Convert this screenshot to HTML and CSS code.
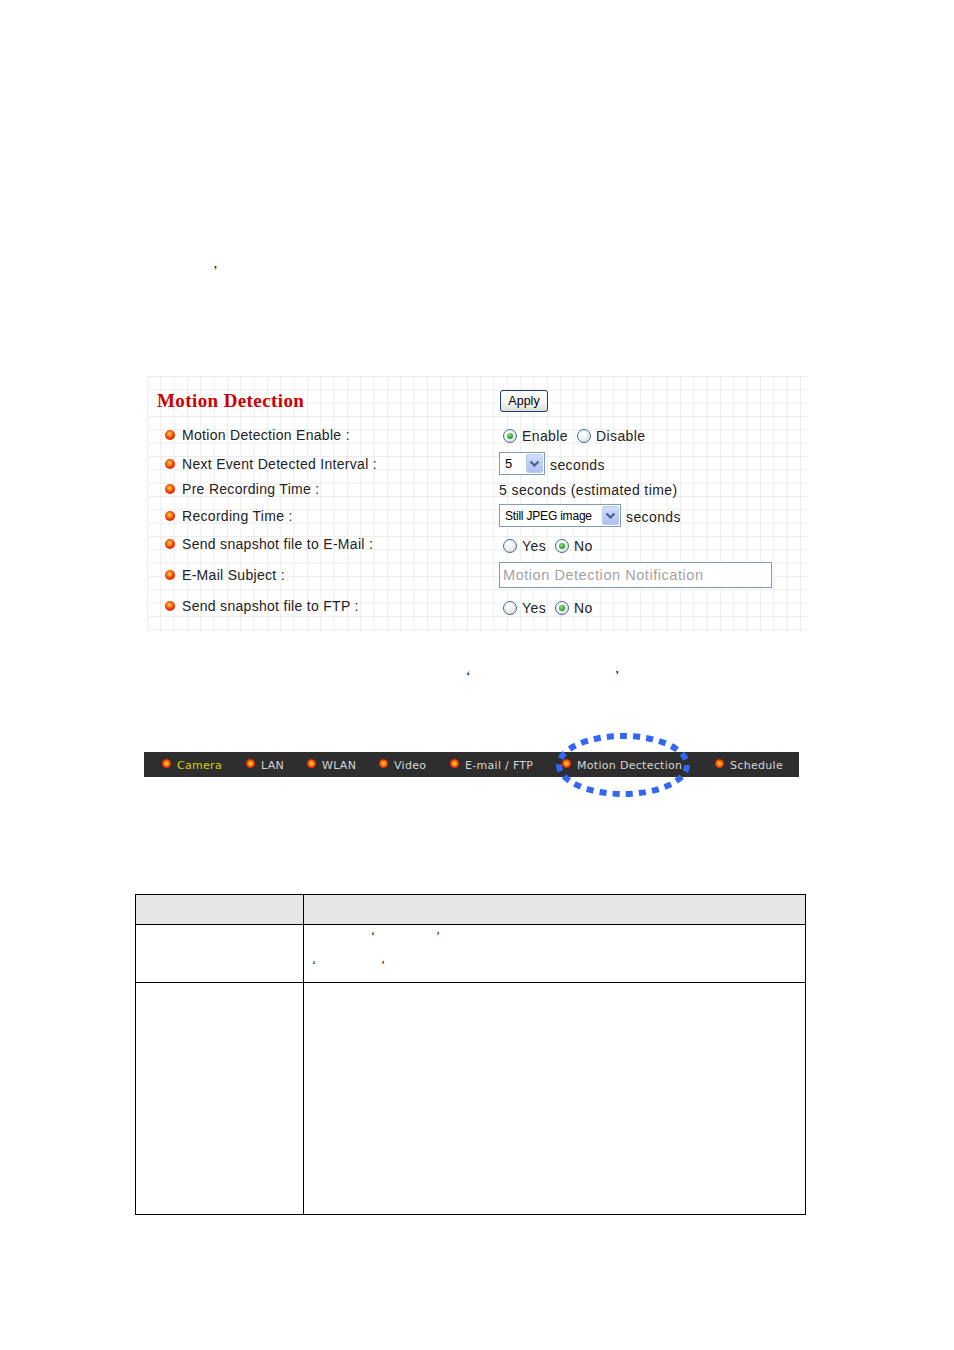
FILE: index.html
```html
<!DOCTYPE html>
<html>
<head>
<meta charset="utf-8">
<title>Motion Detection</title>
<link rel="stylesheet" href="styles.css">
</head>
<body>
<div class="page">
  <p class="stray s1"><span>’</span></p>

  <div class="panel">
    <div class="row h-title">
      <div class="title">Motion Detection</div>
      <div class="val"><span class="btn">Apply</span></div>
    </div>
    <div class="row h-enable">
      <div class="lbl"><i class="dot"></i>Motion Detection Enable :</div>
      <div class="val radios"><span class="radio on"></span><span class="rt">Enable</span><span class="radio"></span><span class="rt">Disable</span></div>
    </div>
    <div class="row h-next">
      <div class="lbl"><i class="dot"></i>Next Event Detected Interval :</div>
      <div class="val"><span class="sel sel-s"><span class="sel-t">5</span><span class="arr"><svg width="11" height="8" viewBox="0 0 11 8"><path d="M1.5 1.5 L5.5 5.5 L9.5 1.5" fill="none" stroke="#4a5f86" stroke-width="2.2"/></svg></span></span><span class="vt">seconds</span></div>
    </div>
    <div class="row h-pre">
      <div class="lbl"><i class="dot"></i>Pre Recording Time :</div>
      <div class="val"><span class="vt0">5 seconds (estimated time)</span></div>
    </div>
    <div class="row h-rec">
      <div class="lbl"><i class="dot"></i>Recording Time :</div>
      <div class="val"><span class="sel sel-l"><span class="sel-t small">Still JPEG image</span><span class="arr"><svg width="11" height="8" viewBox="0 0 11 8"><path d="M1.5 1.5 L5.5 5.5 L9.5 1.5" fill="none" stroke="#4a5f86" stroke-width="2.2"/></svg></span></span><span class="vt">seconds</span></div>
    </div>
    <div class="row h-mail">
      <div class="lbl"><i class="dot"></i>Send snapshot file to E-Mail :</div>
      <div class="val radios"><span class="radio"></span><span class="rt">Yes</span><span class="radio on"></span><span class="rt">No</span></div>
    </div>
    <div class="row h-subj">
      <div class="lbl"><i class="dot"></i>E-Mail Subject :</div>
      <div class="val"><span class="txt">Motion Detection Notification</span></div>
    </div>
    <div class="row h-ftp">
      <div class="lbl"><i class="dot"></i>Send snapshot file to FTP :</div>
      <div class="val radios"><span class="radio"></span><span class="rt">Yes</span><span class="radio on"></span><span class="rt">No</span></div>
    </div>
  </div>

  <p class="stray s2"><span>‘</span><span class="q2">’</span></p>

  <div class="nav">
    <div class="ni w-cam"><i class="nd"></i><span class="nt cam">Camera</span></div>
    <div class="ni w-lan"><i class="nd"></i><span class="nt">LAN</span></div>
    <div class="ni w-wlan"><i class="nd"></i><span class="nt">WLAN</span></div>
    <div class="ni w-vid"><i class="nd"></i><span class="nt">Video</span></div>
    <div class="ni w-mail"><i class="nd"></i><span class="nt">E-mail / FTP</span></div>
    <div class="ni w-mot"><i class="nd"></i><span class="nt">Motion Dectection</span></div>
    <div class="ni"><i class="nd"></i><span class="nt">Schedule</span></div>
    <svg class="ring" width="142" height="72" viewBox="0 0 142 72"><ellipse cx="71" cy="36" rx="64" ry="29" fill="none" stroke="#3366f2" stroke-width="6" stroke-dasharray="7 6.15"/></svg>
  </div>

  <table class="tbl">
    <tr class="th"><td class="c1"></td><td></td></tr>
    <tr class="tr2"><td class="c1"></td><td class="c2"><div class="ql l1"><span class="a1">‘</span><span class="b1">’</span></div><div class="ql l2"><span class="a2">‘</span><span class="b2">’</span></div></td></tr>
    <tr class="tr3"><td class="c1"></td><td></td></tr>
  </table>
</div>
</body>
</html>
```

FILE: styles.css
```css
html, body {
  margin: 0;
  padding: 0;
  background: #ffffff;
}
body {
  font-family: "Liberation Sans", Arial, sans-serif;
  color: #222;
}
.page {
  width: 954px;
}

.stray {
  margin: 0;
  height: 16px;
  font: 14px/16px "Liberation Serif", serif;
  color: #000;
}
.s1 {
  margin-top: 264px;
  padding-left: 213px;
}
.s2 {
  margin-top: 37px;
  padding-left: 466px;
}
.s2 .q2 {
  margin-left: 144px;
}

/* panel */
.panel {
  margin: 96px 0 0 147px;
  width: 660px;
  height: 256px;
  box-sizing: border-box;
  padding-top: 8px;
  background-color: #fff;
  background-image:
    linear-gradient(to right, #ececec 1px, transparent 1px),
    linear-gradient(to bottom, #ececec 1px, transparent 1px);
  background-size: 13.33px 13.33px;
}
.row {
  display: grid;
  grid-template-columns: 352px 1fr;
  align-items: center;
}
.h-title { height: 33px; }
.h-enable { height: 35px; }
.h-next { height: 22px; }
.h-pre { height: 30px; }
.h-rec { height: 22px; }
.h-mail { height: 36px; }
.h-subj { height: 26px; }
.h-ftp { height: 36px; }

.title {
  padding-left: 10px;
  font: bold 19px/20px "Liberation Serif", serif;
  letter-spacing: 0.4px;
  color: #cc0000;
}
.lbl {
  display: flex;
  align-items: center;
  padding-left: 18px;
  font-size: 14px;
  letter-spacing: 0.3px;
  color: #222;
}
.dot {
  display: block;
  width: 10px;
  height: 10px;
  border-radius: 50%;
  margin-right: 7px;
  background: radial-gradient(circle at 45% 40%, #ffe36a 0, #ff8a14 25%, #ee2a08 58%, #b01000 100%);
}
.val {
  display: flex;
  align-items: center;
  font-size: 14px;
  color: #222;
  letter-spacing: 0.4px;
}
.radios {
  padding-left: 4px;
  padding-top: 3px;
}
.radio {
  display: flex;
  align-items: center;
  justify-content: center;
  width: 12px;
  height: 12px;
  border: 1px solid #3d6a98;
  border-radius: 50%;
  background: radial-gradient(circle at 35% 30%, #ffffff 0, #f2f2ee 45%, #d0d0c8 100%);
  box-sizing: content-box;
}
.radio.on::after {
  content: "";
  width: 6px;
  height: 6px;
  border-radius: 50%;
  background: radial-gradient(circle at 40% 35%, #8ce08c 0, #2aa52a 60%, #1c801c 100%);
}
.rt {
  margin-left: 5px;
  margin-right: 9px;
}

.btn {
  display: flex;
  align-items: center;
  justify-content: center;
  margin-left: 1px;
  width: 46px;
  height: 20px;
  border: 1px solid #1e3f6b;
  border-radius: 3px;
  background: linear-gradient(to bottom, #ffffff 0, #f3f3ef 60%, #dedcd2 100%);
  font-size: 12.5px;
  color: #000;
  letter-spacing: 0;
}

.sel {
  display: flex;
  align-items: center;
  justify-content: space-between;
  box-sizing: border-box;
  height: 23px;
  border: 1px solid #7f9db9;
  background: #fff;
  padding: 1px;
}
.sel-s { width: 46px; }
.sel-l { width: 122px; }
.sel-t {
  padding-left: 4px;
  font-size: 13px;
  color: #000;
  letter-spacing: 0;
}
.sel-t.small {
  font-size: 12px;
  letter-spacing: -0.2px;
}
.arr {
  display: flex;
  align-items: center;
  justify-content: center;
  width: 17px;
  height: 19px;
  box-sizing: border-box;
  border: 1px solid #b9cbf5;
  border-radius: 2px;
  background: linear-gradient(to bottom, #d2defd 0, #bccdf8 50%, #aec2f4 100%);
}
.vt {
  margin-left: 5px;
  padding-top: 3px;
}
.vt0 {
  padding-top: 2px;
}

.txt {
  display: flex;
  align-items: center;
  box-sizing: border-box;
  width: 273px;
  height: 26px;
  border: 1px solid #7f9db9;
  background: #fff;
  padding-left: 3px;
  color: #a3a3a3;
  font-size: 14.5px;
  letter-spacing: 0.55px;
}

/* nav bar */
.nav {
  position: relative;
  display: flex;
  align-items: center;
  margin: 67px 0 0 144px;
  width: 655px;
  height: 25px;
  box-sizing: border-box;
  padding-left: 18px;
  background: #2e2e2e;
}
.ni {
  display: flex;
  align-items: center;
  flex: none;
}
.w-cam { width: 84px; }
.w-lan { width: 61px; }
.w-wlan { width: 72px; }
.w-vid { width: 71px; }
.w-mail { width: 112px; }
.w-mot { width: 153px; }
.nd {
  display: block;
  width: 9px;
  height: 9px;
  border-radius: 50%;
  margin-right: 6px;
  margin-top: -2px;
  background: radial-gradient(circle at 50% 50%, #ffe84a 0, #ff9a10 28%, #f02a06 62%, #b01000 100%);
}
.nt {
  font-family: "DejaVu Sans", sans-serif;
  font-size: 11px;
  letter-spacing: 0.3px;
  color: #d6d6d6;
  padding-top: 1px;
}
.nt.cam {
  color: #d4d400;
}
.ring {
  position: absolute;
  left: 408px;
  top: -23px;
}

/* table */
.tbl {
  margin: 117px 0 0 135px;
  width: 671px;
  border-collapse: collapse;
}
.tbl td {
  border: 1px solid #000;
  padding: 0;
  vertical-align: top;
}
.tbl .c1 {
  width: 167px;
}
.th {
  height: 30px;
  background: #e6e6e6;
}
.tr2 { height: 58px; }
.tr3 { height: 232px; }
.ql {
  height: 16px;
  font: 12px/16px "Liberation Serif", serif;
  color: #000;
}
.l1 {
  margin-top: 3px;
}
.l2 {
  margin-top: 13px;
}
.a1 { margin-left: 67px; }
.b1 { margin-left: 61px; }
.a2 { margin-left: 8px; }
.b2 { margin-left: 65px; }
```
